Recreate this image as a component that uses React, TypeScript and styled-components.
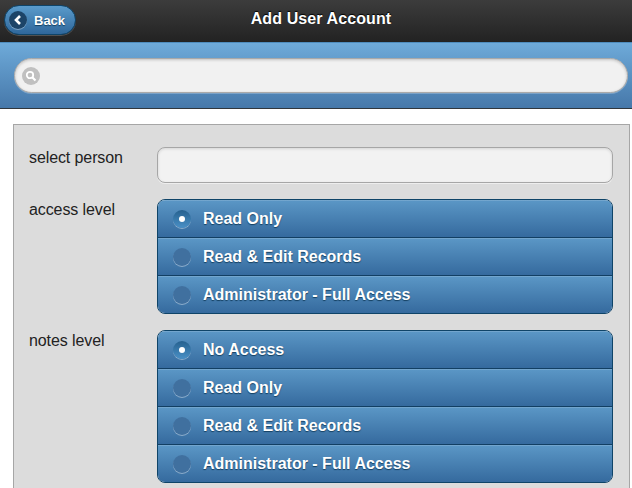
import styled, { createGlobalStyle } from "styled-components";

const GlobalStyle = createGlobalStyle`
  html, body {
    margin: 0;
    padding: 0;
    height: 488px;
    overflow: hidden;
    background: #fff;
    font-family: "Liberation Sans", Arial, sans-serif;
  }
`;

const Page = styled.div`
  width: 632px;
  height: 488px;
  overflow: hidden;
`;

const Header = styled.div`
  height: 41px;
  border-bottom: 1px solid #222;
  background: linear-gradient(#3c3c3c, #232323);
  position: relative;
  display: flex;
  align-items: center;
  justify-content: center;
`;

const Title = styled.h1`
  margin: 0;
  font-size: 16px;
  font-weight: bold;
  letter-spacing: 0.1px;
  color: #fff;
  text-shadow: 0 -1px 1px #000;
  position: relative;
  top: -2px;
  left: 5px;
`;

const BackButton = styled.a`
  position: absolute;
  left: 4px;
  top: 5px;
  width: 70px;
  height: 28px;
  border: 1px solid #0f4468;
  border-radius: 15px;
  background: linear-gradient(#5a9bcb, #2f679b);
  box-shadow: 0 1px 0 rgba(255, 255, 255, 0.2);
  display: flex;
  align-items: center;
  color: #fff;
  font-size: 13px;
  font-weight: bold;
  text-shadow: 0 1px 1px #14405f;
`;

const BackIcon = styled.span`
  width: 18px;
  height: 18px;
  margin: 0 7px 0 4px;
  border-radius: 50%;
  background: #1c4468;
  box-shadow: 0 1px 0 rgba(255, 255, 255, 0.35);
  display: flex;
  align-items: center;
  justify-content: center;
`;

const SearchBar = styled.div`
  height: 67px;
  box-sizing: border-box;
  border-top: 1px solid #4e8cbd;
  border-bottom: 1px solid #30363c;
  background: linear-gradient(#6eaad9, #4678aa);
  padding: 15px 4px 0 14px;
`;

const SearchField = styled.div`
  height: 35px;
  box-sizing: border-box;
  border: 1px solid #a9a9a9;
  border-radius: 18px;
  background: #f1f1f1;
  box-shadow: inset 0 1px 3px rgba(0, 0, 0, 0.2), 0 1px 0 rgba(255, 255, 255, 0.25);
  display: flex;
  align-items: center;
  padding-left: 7px;
`;

const SearchIcon = styled.span`
  width: 18px;
  height: 18px;
  border-radius: 50%;
  background: #c0c0c0;
  display: flex;
  align-items: center;
  justify-content: center;
`;

const Panel = styled.div`
  margin: 15px 2px 0 13px;
  border: 1px solid #a6a6a6;
  background: #dcdcdc;
  padding: 22px 15px 0 15px;
  height: 400px;
`;

const FieldRow = styled.div`
  display: grid;
  grid-template-columns: 128px 456px;
  margin-bottom: 16px;
`;

const Label = styled.label`
  font-size: 16px;
  letter-spacing: -0.1px;
  line-height: 22px;
  color: #222;
`;

const TextInput = styled.div`
  height: 36px;
  box-sizing: border-box;
  border: 1px solid #a6a6a6;
  border-radius: 8px;
  background: #f2f2f2;
  box-shadow: inset 0 1px 3px rgba(0, 0, 0, 0.12), 0 1px 0 rgba(255, 255, 255, 0.5);
`;

const RadioList = styled.div`
  border: 1px solid #0f4468;
  border-radius: 8px;
  overflow: hidden;
`;

const RadioRow = styled.div`
  height: 37px;
  display: flex;
  align-items: center;
  background: linear-gradient(#5b97c6, #356a9e);
  border-bottom: 1px solid #123f63;
  box-shadow: inset 0 1px 0 rgba(255, 255, 255, 0.15);
  padding-left: 15px;
  color: #fff;
  font-size: 16px;
  font-weight: bold;
  text-shadow: 0 1px 1px #143f60;

  &:last-child {
    border-bottom: 0;
  }
`;

const RadioDot = styled.span<{ $on: boolean }>`
  width: 18px;
  height: 18px;
  margin-right: 12px;
  border-radius: 50%;
  flex: none;
  display: flex;
  align-items: center;
  justify-content: center;
  background: ${({ $on }) => ($on ? "linear-gradient(#26618f, #4a90c6)" : "#40709f")};
  box-shadow: 0 1px 0 rgba(255, 255, 255, 0.4);

  &::after {
    content: "";
    display: ${({ $on }) => ($on ? "block" : "none")};
    width: 6px;
    height: 6px;
    border-radius: 50%;
    background: #fff;
  }
`;

const accessLevels = ["Read Only", "Read & Edit Records", "Administrator - Full Access"];
const notesLevels = ["No Access", "Read Only", "Read & Edit Records", "Administrator - Full Access"];

const App = () => {
  return (
    <Page>
      <GlobalStyle />
      <Header>
        <BackButton>
          <BackIcon>
            <svg width="10" height="12" viewBox="0 0 10 12">
              <path d="M7 2 L3 6 L7 10" fill="none" stroke="#fff" strokeWidth="2.6" />
            </svg>
          </BackIcon>
          Back
        </BackButton>
        <Title>Add User Account</Title>
      </Header>
      <SearchBar>
        <SearchField>
          <SearchIcon>
            <svg width="12" height="12" viewBox="0 0 12 12">
              <circle cx="5" cy="5" r="3.2" fill="none" stroke="#fff" strokeWidth="1.8" />
              <path d="M7.5 7.5 L10.5 10.5" stroke="#fff" strokeWidth="2.2" />
            </svg>
          </SearchIcon>
        </SearchField>
      </SearchBar>
      <Panel>
        <FieldRow>
          <Label>select person</Label>
          <TextInput />
        </FieldRow>
        <FieldRow>
          <Label>access level</Label>
          <RadioList>
            {accessLevels.map((text, i) => (
              <RadioRow key={text}>
                <RadioDot $on={i === 0} />
                {text}
              </RadioRow>
            ))}
          </RadioList>
        </FieldRow>
        <FieldRow>
          <Label>notes level</Label>
          <RadioList>
            {notesLevels.map((text, i) => (
              <RadioRow key={text}>
                <RadioDot $on={i === 0} />
                {text}
              </RadioRow>
            ))}
          </RadioList>
        </FieldRow>
      </Panel>
    </Page>
  );
};

export default App;
